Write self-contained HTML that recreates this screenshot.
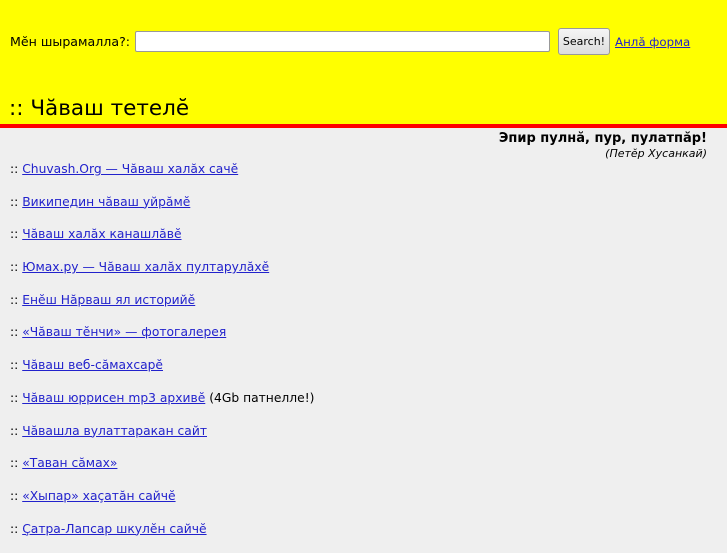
<!DOCTYPE html>
<html><head><meta charset="utf-8"><style>
body{margin:0;background:#efefef;font-family:"DejaVu Sans","Liberation Sans",sans-serif;font-size:12px;color:#000;width:727px;height:545px;overflow:hidden}
#top{background:#ff0;height:124px;border-bottom:4px solid #f00;position:relative}
.lbl{position:absolute;left:10px;top:34px;font-size:12.6px}
input{position:absolute;left:135px;top:31px;width:413px;height:19px;border:1px solid #999;border-radius:2px;background:#fff;padding:0;margin:0}
.btn{position:absolute;left:558px;top:28px;width:50px;height:25px;border:1px solid #999;border-radius:3px;background:linear-gradient(#f5f5f5,#ddd);font-size:11px;line-height:25px;text-align:center}
.af{position:absolute;left:615px;top:35px;color:#22c;text-decoration:underline;font-size:11.8px}
h1{position:absolute;left:9px;top:96px;margin:0;font-weight:normal;font-size:21.5px}
.q{text-align:right;padding-right:20px;padding-top:3px}
.q b{font-size:13px}.q i{font-size:11px}
ul{list-style:none;margin:0;padding:0;position:absolute;left:10px;top:161px}
li{height:32.7px;line-height:16px;font-size:12.3px}
a{color:#22c}
</style></head><body>
<div id="top"><span class="lbl">Мĕн шырамалла?:</span><input><div class="btn">Search!</div><a class="af">Анлă форма</a><h1>:: Чăваш тетелĕ</h1></div>
<div class="q"><b>Эпир пулнă, пур, пулатпăр!</b><br><i>(Петĕр Хусанкай)</i></div>
<ul>
<li>:: <a href="#">Chuvash.Org — Чăваш халăх сачĕ</a></li>
<li>:: <a href="#">Википедин чăваш уйрăмĕ</a></li>
<li>:: <a href="#">Чăваш халăх канашлăвĕ</a></li>
<li>:: <a href="#">Юмах.ру — Чăваш халăх пултарулăхĕ</a></li>
<li>:: <a href="#">Енĕш Нăрваш ял историйĕ</a></li>
<li>:: <a href="#">«Чăваш тĕнчи» — фотогалерея</a></li>
<li>:: <a href="#">Чăваш веб-сăмахсарĕ</a></li>
<li>:: <a href="#">Чăваш юррисен mp3 архивĕ</a> (4Gb патнелле!)</li>
<li>:: <a href="#">Чăвашла вулаттаракан сайт</a></li>
<li>:: <a href="#">«Таван сăмах»</a></li>
<li>:: <a href="#">«Хыпар» хаçатăн сайчĕ</a></li>
<li>:: <a href="#">Çатра-Лапсар шкулĕн сайчĕ</a></li>
</ul>
</body></html>
